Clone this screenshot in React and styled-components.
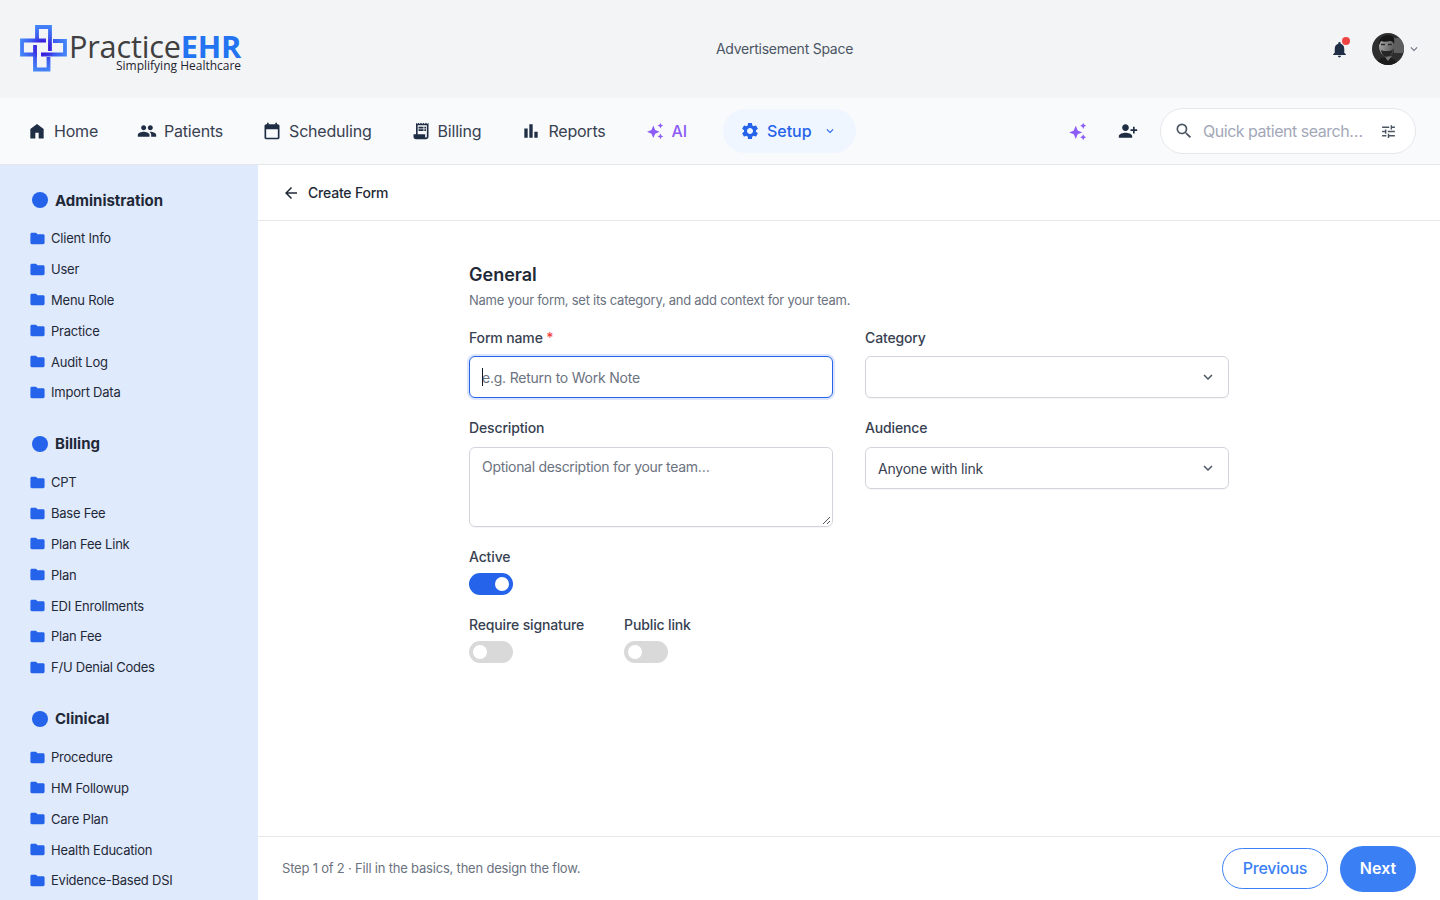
import React from 'react';
import styled, { createGlobalStyle } from 'styled-components';
import { MdPeople, MdReceiptLong, MdBarChart, MdSettings, MdKeyboardArrowDown, MdNotifications, MdPersonAdd, MdSearch, MdTune, MdFolder, MdArrowBack } from 'react-icons/md';

const Global = createGlobalStyle`
  html, body { margin: 0; padding: 0; height: 100%; overflow: hidden; background: #fff; }
  * { box-sizing: border-box; }
  body { font-family: Inter, "Noto Sans", sans-serif; color: #1f2937; }
`;
const Page = styled.div`display: flex; flex-direction: column; height: 900px; width: 1440px; overflow: hidden;`;
const TopBar = styled.header`height: 98px; background: #f3f4f6; display: flex; align-items: center; padding: 0 19px 0 20px;`;
const LogoWrap = styled.div`display: flex; align-items: flex-start; width: 222px; height: 47px; margin-top: -1px;`;
const MarkSvg = styled.svg`flex: none;`;
const LogoText = styled.div`display: flex; flex-direction: column; align-items: flex-end; margin-left: 2px; font-family: "Open Sans", sans-serif;`;
const LogoMain = styled.div`font-size: 30.7px; line-height: 28px; margin-top: 7px; color: #404040; font-weight: 400; letter-spacing: -0.2px; white-space: nowrap;
  b { color: #2474f2; font-weight: 700; }`;
const LogoSub = styled.div`font-size: 12px; line-height: 14px; margin-top: -1px; color: #1f2430; white-space: nowrap;`;
const Ad = styled.div`flex: 1; text-align: center; font-size: 14px; letter-spacing: -0.25px; color: #4b5563; padding: 0 3px 2px 0;`;
const TopRight = styled.div`display: flex; align-items: center;`;
const BellWrap = styled.div`position: relative; width: 19px; height: 19px; color: #1f2d45; font-size: 19px; display: flex; margin-right: 23px;`;
const Dot = styled.span`position: absolute; top: -3px; right: -1px; width: 8px; height: 8px; border-radius: 50%; background: #ef4444;`;
const Chevron = styled.span`display: flex; color: ${p => p.$c || '#6b7280'}; font-size: ${p => p.$s || 14}px; margin-left: ${p => p.$ml || 0}px;`;

const NavBar = styled.nav`height: 67px; background: #f9fafb; border-bottom: 1px solid #e5e7eb; display: flex; align-items: center; padding: 0 24px 0 27px;`;
const NavItem = styled.div`display: flex; align-items: center; gap: 7px; font-size: 16px; letter-spacing: -0.2px; font-weight: ${p => p.$w || 400}; color: ${p => p.$c || '#374151'}; margin-right: ${p => p.$mr || 39}px; white-space: nowrap;
  svg { color: ${p => p.$ic || '#1f2d45'}; flex: none; }`;
const SetupPill = styled.div`display: flex; align-items: center; height: 44px; width: 133px; padding: 0 17px; border-radius: 22px; background: #eff6ff; color: #2563eb; font-size: 16px; font-weight: 500; gap: 7px; svg { flex: none; }`;
const NavSpacer = styled.div`flex: 1;`;
const IconBtn = styled.div`display: flex; margin-right: ${p => p.$mr}px; color: ${p => p.$c}; transform: ${p => p.$flip ? 'scaleX(-1)' : 'none'};`;
const Search = styled.div`width: 256px; height: 46px; border: 1px solid #e5e7eb; border-radius: 23px; background: #fff; display: flex; align-items: center; padding: 0 18px 0 13px; gap: 9px; color: #4b5563;`;
const SearchText = styled.span`flex: 1; font-size: 16px; letter-spacing: -0.48px; color: #a3a8b8; white-space: nowrap;`;

const Body = styled.div`flex: 1; display: flex; min-height: 0;`;
const Sidebar = styled.aside`width: 258px; flex: none; background: #dfeafd; padding: 26px 0 0 28.5px; overflow: hidden;`;
const Section = styled.section`margin-bottom: 27.2px;`;
const SectionHead = styled.div`display: flex; align-items: center; gap: 7px; font-size: 15px; font-weight: 700; color: #1f2937; height: 18px; margin-bottom: 14px; padding-left: 3.5px;`;
const SectionDot = styled.span`width: 16px; height: 16px; border-radius: 50%; background: #2563eb;`;
const SideItem = styled.div`display: flex; align-items: center; gap: 5.5px; height: 30.8px; font-size: 13px; letter-spacing: -0.22px; color: #1f2937; svg { color: #2563eb; flex: none; }`;

const Main = styled.main`flex: 1; display: flex; flex-direction: column; min-width: 0;`;
const SubHead = styled.div`height: 56px; border-bottom: 1px solid #e5e7eb; display: flex; align-items: center; padding-left: 24px; gap: 8px; font-size: 14px; letter-spacing: -0.2px; font-weight: 500; color: #1f2937;`;
const Content = styled.div`flex: 1; padding: 44px 0 0 211px;`;
const Title = styled.h2`margin: 0; font-size: 18px; line-height: 20px; font-weight: 600; color: #1f2937;`;
const Sub = styled.p`margin: 7px 0 0; font-size: 13px; line-height: 16px; letter-spacing: -0.26px; color: #6b7280;`;
const Grid = styled.div`display: grid; grid-template-columns: 364px 364px; column-gap: 32px; margin-top: 21px;`;
const Col = styled.div`display: flex; flex-direction: column;`;
const Field = styled.div`margin-bottom: 21px;`;
const Label = styled.label`display: block; font-size: 14px; line-height: 18px; font-weight: 500; letter-spacing: -0.14px; color: #374151; margin-bottom: ${p => p.$mb || 9}px; white-space: nowrap;
  i { color: #ef4444; font-style: normal; }`;
const Input = styled.div`height: 42px; border: 1px solid ${p => p.$focus ? '#2563eb' : '#d1d5db'}; border-radius: 6px; background: #fff; display: flex; align-items: center; padding: 0 11px 0 12px; font-size: 14px; letter-spacing: -0.22px; color: ${p => p.$ph ? '#6b7280' : '#374151'}; justify-content: space-between; position: relative;
  box-shadow: ${p => p.$focus ? '0 0 0 2px #dbe6fd' : '0 1px 1px rgba(0,0,0,.04)'};`;
const Caret = styled.span`width: 1px; height: 18px; background: #111827; position: absolute; left: 12px; top: 11px;`;
const Area = styled.div`height: 80px; border: 1px solid #d1d5db; border-radius: 6px; padding: 10px 12px; font-size: 14px; line-height: 18px; letter-spacing: -0.3px; color: #6b7280; position: relative; box-shadow: 0 1px 1px rgba(0,0,0,.04);`;
const Grip = styled.svg`position: absolute; right: 1px; bottom: 1px;`;
const ToggleRow = styled.div`display: flex; gap: 40px;`;
const Track = styled.div`width: 44px; height: 22px; border-radius: 11px; background: ${p => p.$on ? '#2563eb' : '#d9d9d9'}; position: relative;`;
const Knob = styled.span`position: absolute; top: 4px; left: ${p => p.$on ? '26px' : '4px'}; width: 14px; height: 14px; border-radius: 50%; background: #fff;`;
const Footer = styled.footer`height: 64px; border-top: 1px solid #e5e7eb; display: flex; align-items: center; padding: 0 24px; font-size: 13px; color: #6b7280; gap: 12px;`;
const FooterText = styled.span`flex: 1; letter-spacing: -0.2px; padding-bottom: 2px;`;
const OutlineBtn = styled.div`width: 106px; height: 41px; border: 1px solid #3b7ff5; border-radius: 21px; color: #3b7ff5; font-size: 16px; letter-spacing: -0.25px; font-weight: 500; display: flex; align-items: center; justify-content: center; padding-bottom: 1px;`;
const PrimaryBtn = styled.div`width: 76px; height: 46px; border-radius: 23px; background: #3b7ff5; color: #fff; font-size: 16px; font-weight: 600; display: flex; align-items: center; justify-content: center; padding-bottom: 1px;`;

const Sparkle = ({ size = 20, color = '#8b5cf6' }) => (
  <svg width={size} height={size} viewBox="0 0 24 24" fill={color}>
    <path d="M10 5.5l2.2 5.3 5.3 2.2-5.3 2.2L10 20.5l-2.2-5.3L2.5 13l5.3-2.2z" />
    <path d="M18.5 2l1.1 2.4L22 5.5l-2.4 1.1-1.1 2.4-1.1-2.4L15 5.5l2.4-1.1z" />
    <path d="M18.5 15l1.1 2.4 2.4 1.1-2.4 1.1-1.1 2.4-1.1-2.4-2.4-1.1 2.4-1.1z" />
  </svg>
);
const HomeIcon = ({ size = 20 }) => (
  <svg width={size} height={size} viewBox="0 0 24 24" fill="currentColor"><path d="M4 21V9.5l8-6 8 6V21h-6v-7h-4v7z" /></svg>
);
const CalIcon = ({ size = 20 }) => (
  <svg width={size} height={size} viewBox="0 0 24 24" fill="currentColor"><path d="M5 22q-.825 0-1.412-.587T3 20V6q0-.825.588-1.413T5 4h1V2h2v2h8V2h2v2h1q.825 0 1.413.588T21 6v14q0 .825-.587 1.413T19 22zm0-2h14V10H5z" /></svg>
);

const LogoMark = () => (
  <MarkSvg width="47" height="47" viewBox="0 0 47 47" fill="none">
    <defs>
      <radialGradient id="lg1" gradientUnits="userSpaceOnUse" cx="23" cy="23" r="24">
        <stop offset="0.2" stopColor="#3710d8" /><stop offset="0.55" stopColor="#3d5cf0" /><stop offset="1" stopColor="#4489f8" />
      </radialGradient>
    </defs>
    <g stroke="url(#lg1)" strokeWidth="3.8">
      <path d="M30 26V2H17v13" />
      <path d="M26 15.5H2v14h15" />
      <path d="M15 20v24.5h13.500V32" />
      <path d="M21 29.500h24V16H33" />
    </g>
  </MarkSvg>
);

const Avatar = () => (
  <svg width="32" height="32" viewBox="0 0 32 32">
    <defs>
      <clipPath id="av"><circle cx="16" cy="16" r="16" /></clipPath>
      <filter id="soft"><feGaussianBlur stdDeviation="0.7" /></filter>
      <linearGradient id="face" x1="0" y1="0" x2="1" y2="0.6">
        <stop offset="0" stopColor="#b5b5b5" /><stop offset="1" stopColor="#5a5a5a" />
      </linearGradient>
    </defs>
    <g clipPath="url(#av)">
      <rect width="32" height="32" fill="#2e2e2e" />
      <g filter="url(#soft)">
        <rect x="22" y="5" width="10" height="15" fill="#5f5f5f" />
        <path d="M7 13c0-6 3-9 8-9s7 3 7 9-3 11-7 11-8-5-8-11z" fill="url(#face)" />
        <path d="M7 12c-1-6 4-10 9-10s7 3 6 9c-1-2-2-3-4-3-3 1-7 1-9 0z" fill="#191919" />
        <path d="M9 11.500h4M16 11.500h4" stroke="#2a2a2a" strokeWidth="1.600" />
        <path d="M9 17c1 5 3 7 6 7s5-3 6-8c-2 2-3 2-6 2s-4 0-6-1z" fill="#262626" />
        <path d="M4 33c1-6 5-9 10-9s11 3 13 9z" fill="#1b1b1b" />
        <path d="M13 24l3 4 4-5z" fill="#777" />
      </g>
    </g>
  </svg>
);

const sections = [
  ['Administration', ['Client Info', 'User', 'Menu Role', 'Practice', 'Audit Log', 'Import Data']],
  ['Billing', ['CPT', 'Base Fee', 'Plan Fee Link', 'Plan', 'EDI Enrollments', 'Plan Fee', 'F/U Denial Codes']],
  ['Clinical', ['Procedure', 'HM Followup', 'Care Plan', 'Health Education', 'Evidence-Based DSI']],
];

const nav = [
  [HomeIcon, 'Home', 39],
  [MdPeople, 'Patients', 39],
  [CalIcon, 'Scheduling', 39],
  [MdReceiptLong, 'Billing', 40],
  [MdBarChart, 'Reports', 39],
];

export default function App() {
  return (
    <Page>
      <Global />
      <TopBar>
        <LogoWrap>
          <LogoMark />
          <LogoText>
            <LogoMain>Practice<b>EHR</b></LogoMain>
            <LogoSub>Simplifying Healthcare</LogoSub>
          </LogoText>
        </LogoWrap>
        <Ad>Advertisement Space</Ad>
        <TopRight>
          <BellWrap><MdNotifications /><Dot /></BellWrap>
          <Avatar />
          <Chevron $ml={3}><MdKeyboardArrowDown /></Chevron>
        </TopRight>
      </TopBar>
      <NavBar>
        {nav.map(([I, t, mr]) => (
          <NavItem key={t} $mr={mr}><I size={20} />{t}</NavItem>
        ))}
        <NavItem $c="#8b5cf6" $ic="#8b5cf6" $mr={36} $w={500}><Sparkle />AI</NavItem>
        <SetupPill><MdSettings size={20} />Setup<Chevron $c="#2563eb" $s={14} $ml={4}><MdKeyboardArrowDown /></Chevron></SetupPill>
        <NavSpacer />
        <IconBtn $mr={30} $c="#8b5cf6"><Sparkle size={21} /></IconBtn>
        <IconBtn $mr={22} $c="#1f2d45" $flip><MdPersonAdd size={20} /></IconBtn>
        <Search>
          <MdSearch size={20} />
          <SearchText>Quick patient search…</SearchText>
          <MdTune size={17} />
        </Search>
      </NavBar>
      <Body>
        <Sidebar>
          {sections.map(([h, items]) => (
            <Section key={h}>
              <SectionHead><SectionDot />{h}</SectionHead>
              {items.map(i => <SideItem key={i}><MdFolder size={17} />{i}</SideItem>)}
            </Section>
          ))}
        </Sidebar>
        <Main>
          <SubHead><MdArrowBack size={18} />Create Form</SubHead>
          <Content>
            <Title>General</Title>
            <Sub>Name your form, set its category, and add context for your team.</Sub>
            <Grid>
              <Col>
                <Field>
                  <Label>Form name <i>*</i></Label>
                  <Input $focus $ph><Caret />e.g. Return to Work Note</Input>
                </Field>
                <Field>
                  <Label $mb={10}>Description</Label>
                  <Area>Optional description for your team…
                    <Grip width="9" height="9" viewBox="0 0 9 9"><path d="M1 8l7-7M5 8l3-3" stroke="#555" strokeWidth="1" /></Grip>
                  </Area>
                </Field>
                <Field>
                  <Label $mb={7}>Active</Label>
                  <Track $on><Knob $on /></Track>
                </Field>
                <ToggleRow>
                  <div><Label $mb={7}>Require signature</Label><Track><Knob /></Track></div>
                  <div><Label $mb={7}>Public link</Label><Track><Knob /></Track></div>
                </ToggleRow>
              </Col>
              <Col>
                <Field>
                  <Label>Category</Label>
                  <Input><span /><Chevron $c="#4b5563" $s={18}><MdKeyboardArrowDown /></Chevron></Input>
                </Field>
                <Field>
                  <Label $mb={10}>Audience</Label>
                  <Input>Anyone with link<Chevron $c="#4b5563" $s={18}><MdKeyboardArrowDown /></Chevron></Input>
                </Field>
              </Col>
            </Grid>
          </Content>
          <Footer>
            <FooterText>Step 1 of 2 · Fill in the basics, then design the flow.</FooterText>
            <OutlineBtn>Previous</OutlineBtn>
            <PrimaryBtn>Next</PrimaryBtn>
          </Footer>
        </Main>
      </Body>
    </Page>
  );
}
